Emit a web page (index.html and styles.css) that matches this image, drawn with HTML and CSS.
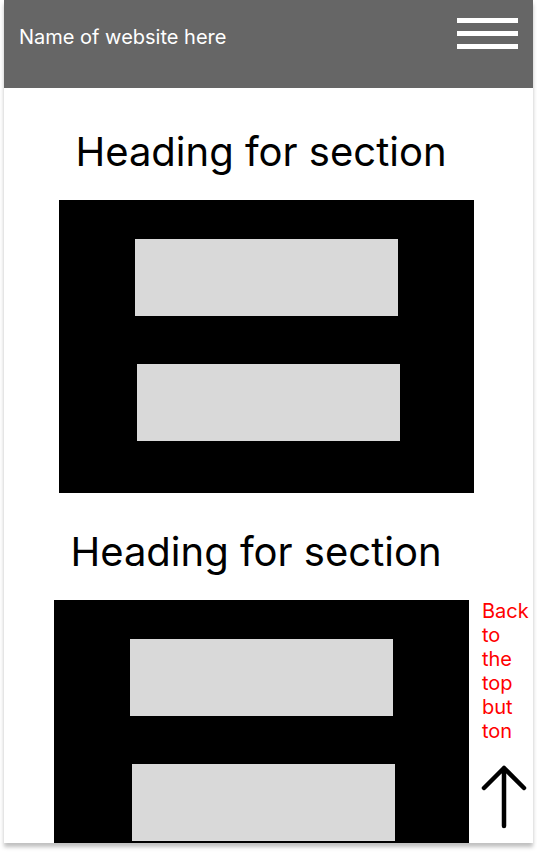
FILE: index.html
```html
<!DOCTYPE html>
<html>
<head>
<meta charset="utf-8">
<link rel="stylesheet" href="styles.css">
</head>
<body>
<div class="card">
  <header class="topbar">
    <span class="site-name">Name of website here</span>
    <div class="burger"><span></span><span></span><span></span></div>
  </header>
  <main class="content">
    <section class="section s1">
      <h2 class="heading">Heading for section</h2>
      <div class="panel">
        <div class="block b1"></div>
        <div class="block b2"></div>
      </div>
    </section>
    <section class="section s2">
      <h2 class="heading">Heading for section</h2>
      <div class="panel">
        <div class="block b1"></div>
        <div class="block b2"></div>
      </div>
    </section>
  </main>
  <a class="to-top" href="#">
    <span class="to-top-text">Back to the top but<wbr>ton</span>
    <svg class="arrow" width="48" height="64" viewBox="0 0 48 64">
      <path d="M23 3 V61 M3 23 L23 3 L43 23" fill="none" stroke="#000" stroke-width="4.5" stroke-linecap="round" stroke-linejoin="round"/>
    </svg>
  </a>
</div>
</body>
</html>
```
FILE: styles.css
```css
html, body {
  margin: 0;
  padding: 0;
  background: #fff;
}
body {
  font-family: Inter, "Noto Sans", sans-serif;
  width: 537px;
  height: 853px;
  overflow: hidden;
}
.card {
  position: relative;
  margin-left: 4px;
  width: 529px;
  height: 843px;
  background: #fff;
  overflow: hidden;
  box-shadow: 0 4px 4px rgba(0,0,0,0.25);
}
.topbar {
  height: 88px;
  background: #666666;
  display: flex;
  align-items: flex-start;
  justify-content: space-between;
  box-sizing: border-box;
  padding: 18px 15px 0 15px;
}
.site-name {
  color: #fff;
  font-size: 20px;
  line-height: 24px;
  margin-top: 7px;
}
.burger {
  display: flex;
  flex-direction: column;
  gap: 8px;
  width: 61px;
}
.burger span {
  display: block;
  height: 5px;
  background: #fff;
}
.content {
  display: flex;
  flex-direction: column;
}
.section {
  display: flex;
  flex-direction: column;
}
.heading {
  margin: 0;
  font-weight: 400;
  font-size: 40px;
  line-height: 48px;
  color: #000;
  text-align: center;
}
.s1 .heading {
  margin-top: 40px;
  margin-bottom: 24px;
  padding-right: 15px;
}
.s1 .panel {
  margin-left: 55px;
  height: 293px;
}
.s2 .heading {
  margin-top: 35px;
  margin-bottom: 24px;
  padding-right: 25px;
}
.s2 .panel {
  margin-left: 50px;
  height: 300px;
}
.panel {
  width: 415px;
  background: #000;
  box-sizing: border-box;
  display: flex;
  flex-direction: column;
  padding-top: 39px;
}
.block {
  width: 263px;
  height: 77px;
  background: #d9d9d9;
}
.block.b1 { margin-left: 76px; }
.block.b2 { margin-left: 78px; margin-top: 48px; }

.to-top {
  position: absolute;
  left: 477px;
  top: 599px;
  display: flex;
  flex-direction: column;
  text-decoration: none;
}
.to-top-text {
  color: #ff0000;
  font-size: 20px;
  line-height: 24px;
  width: 48px;
  margin-left: 1px;
}
.arrow {
  margin-top: 22px;
  display: block;
}
```
